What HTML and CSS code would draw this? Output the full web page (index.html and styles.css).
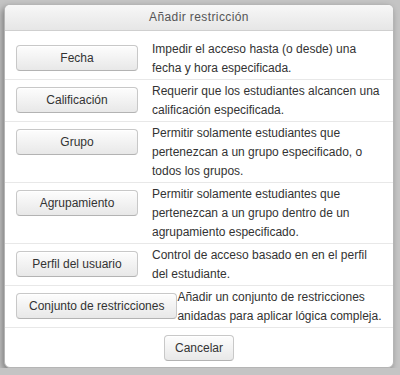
FILE: index.html
```html
<!DOCTYPE html>
<html lang="es">

<head>
    <meta charset="UTF-8">
    <meta name="viewport" content="width=device-width, initial-scale=1.0">
    <title>Añadir restricción</title>
    <link rel="stylesheet" href="styles.css">
</head>

<body>
    <div class="dialog">
        <div class="dialog-header">Añadir restricción</div>
        <div class="dialog-body">
            <div class="option">
                <div class="option-button"><button>Fecha</button></div>
                <div class="option-text">Impedir el acceso hasta (o desde) una fecha y hora especificada.</div>
            </div>
            <div class="option">
                <div class="option-button"><button>Calificación</button></div>
                <div class="option-text">Requerir que los estudiantes alcancen una calificación especificada.</div>
            </div>
            <div class="option">
                <div class="option-button"><button>Grupo</button></div>
                <div class="option-text">Permitir solamente estudiantes que pertenezcan a un grupo especificado, o todos los grupos.</div>
            </div>
            <div class="option">
                <div class="option-button"><button>Agrupamiento</button></div>
                <div class="option-text">Permitir solamente estudiantes que pertenezcan a un grupo dentro de un agrupamiento especificado.</div>
            </div>
            <div class="option">
                <div class="option-button"><button>Perfil del usuario</button></div>
                <div class="option-text">Control de acceso basado en en el perfil del estudiante.</div>
            </div>
            <div class="option">
                <div class="option-button"><button>Conjunto de restricciones</button></div>
                <div class="option-text">Añadir un conjunto de restricciones anidadas para aplicar lógica compleja.</div>
            </div>
        </div>
        <div class="dialog-footer">
            <button>Cancelar</button>
        </div>
    </div>
</body>

</html>
```

FILE: styles.css
```css
body {
    margin: 0;
    padding: 4px 6px 0 4px;
    background-color: #c4c4c4;
    font-family: 'Liberation Sans', Arial, sans-serif;
    font-size: 12px;
    color: #333;
}

.dialog {
    width: 390px;
    height: 364px;
    box-sizing: border-box;
    background-color: #fff;
    border: 1px solid #b5b5b5;
    border-radius: 6px;
    box-shadow: -2px 3px 6px rgba(0, 0, 0, 0.35);
    overflow: hidden;
}

.dialog-header {
    height: 25px;
    line-height: 25px;
    text-align: center;
    color: #555;
    letter-spacing: 0.4px;
    background: linear-gradient(#f7f7f7, #e6e6e6);
    border-bottom: 1px solid #cfcfcf;
}

.dialog-body {
    padding-top: 7px;
}

.option {
    display: flex;
    padding: 2px 8px 1px 11px;
    border-bottom: 1px solid #e8e8e8;
    line-height: 19px;
}

.option-button {
    min-width: 136px;
    flex-shrink: 0;
}

.option-text {
    flex: 1;
}

button {
    font-family: 'Liberation Sans', Arial, sans-serif;
    font-size: 12px;
    color: #333;
    height: 26px;
    padding: 0 10px;
    white-space: nowrap;
    background: linear-gradient(#fdfdfd, #e8e8e8);
    border: 1px solid #c8c8c8;
    border-bottom-color: #b3b3b3;
    border-radius: 4px;
    box-shadow: inset 0 1px 0 #fff;
}

.option-button button {
    min-width: 122px;
    padding: 0 12px;
    margin-top: 5px;
}

.dialog-footer {
    text-align: center;
    padding-top: 7px;
}
```
